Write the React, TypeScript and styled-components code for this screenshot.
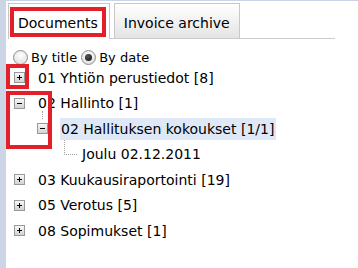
import React from "react";
import styled, { createGlobalStyle } from "styled-components";

const Global = createGlobalStyle`
  html, body { margin: 0; padding: 0; background: #fff; }
  body { font-family: "DejaVu Sans", "Noto Sans", sans-serif; font-size: 14px; color: #000; }
`;

const Page = styled.div`
  position: relative;
  display: flex;
  width: 358px;
  height: 268px;
  overflow: hidden;
`;

const LeftStrip = styled.div`
  width: 6px;
  background: #cbd5e6;
  flex: none;
`;

const Main = styled.div`
  flex: 1;
  display: flex;
  flex-direction: column;
  border-top: 1px solid #c9d4e6;
  padding-left: 2px;
`;

const TabBar = styled.div`
  display: flex;
  align-items: flex-end;
  height: 37px;
  width: 327px;
  border-bottom: 1px solid #cccccc;
  gap: 4px;
`;

const Tab = styled.div<{ $active?: boolean }>`
  height: ${(p) => (p.$active ? 36 : 35)}px;
  box-sizing: border-box;
  display: flex;
  align-items: center;
  padding: 3px ${(p) => (p.$active ? 11 : 9)}px 0 9px;
  border: 1px solid #c8c8c8;
  border-bottom: none;
  font-size: 14px;
  color: #000;
  margin-bottom: ${(p) => (p.$active ? -1 : 0)}px;
  background: ${(p) => (p.$active ? "#fff" : "linear-gradient(#ffffff, #e4e4e4)")};
`;

const RadioRow = styled.div`
  display: flex;
  align-items: center;
  height: 16px;
  margin-top: 10px;
  padding-left: 5px;
  font-size: 13px;
`;

const RadioLabel = styled.label`
  display: flex;
  align-items: center;
  gap: 3px;
  margin-right: 4px;
`;

const Radio = styled.span<{ $checked?: boolean }>`
  width: 15px;
  height: 15px;
  box-sizing: border-box;
  border-radius: 50%;
  border: 1px solid #8e8e8e;
  background: radial-gradient(circle at 50% 35%, #ffffff, #d8d8d8);
  display: flex;
  align-items: center;
  justify-content: center;
  &::after {
    content: "";
    display: ${(p) => (p.$checked ? "block" : "none")};
    width: 7px;
    height: 7px;
    border-radius: 50%;
    background: radial-gradient(circle at 40% 35%, #555, #111);
  }
`;

const Tree = styled.div`
  display: flex;
  flex-direction: column;
`;

const Row = styled.div<{ $level: number }>`
  position: relative;
  display: flex;
  align-items: center;
  height: 25.5px;
  padding-left: ${(p) => 6 + p.$level * 23}px;
`;

const Toggle = styled.span`
  width: 11px;
  height: 11px;
  box-sizing: border-box;
  border: 1px solid #999999;
  background: linear-gradient(#f8f8f8, #d2d2d2);
  position: relative;
  flex: none;
  margin-right: 13px;
`;

const Bar = styled.span<{ $v?: boolean }>`
  position: absolute;
  background: #000;
  left: ${(p) => (p.$v ? 4 : 2)}px;
  top: ${(p) => (p.$v ? 2 : 4)}px;
  width: ${(p) => (p.$v ? 1 : 5)}px;
  height: ${(p) => (p.$v ? 5 : 1)}px;
`;

const Label = styled.span<{ $selected?: boolean }>`
  height: 22px;
  line-height: 22px;
  padding: 0 2px 0 1px;
  margin-left: -1px;
  background: ${(p) => (p.$selected ? "#dfe8f7" : "transparent")};
  white-space: nowrap;
`;

const Connector = styled.span`
  width: 12px;
  height: 14px;
  margin-top: -14px;
  margin-right: 5px;
  margin-left: 4px;
  border-left: 1px dotted #a0a0a0;
  border-bottom: 1px dotted #a0a0a0;
  flex: none;
`;

const StubLine = styled.span<{ $left: number; $top: number; $h: number }>`
  position: absolute;
  left: ${(p) => p.$left}px;
  top: ${(p) => p.$top}px;
  height: ${(p) => p.$h}px;
  border-left: 1px dotted #a0a0a0;
`;

const Mark = styled.div<{ $x: number; $y: number; $w: number; $h: number }>`
  position: absolute;
  left: ${(p) => p.$x}px;
  top: ${(p) => p.$y}px;
  width: ${(p) => p.$w}px;
  height: ${(p) => p.$h}px;
  box-sizing: border-box;
  border: 4px solid #e3202a;
  pointer-events: none;
`;

const Plus = () => (
  <Toggle>
    <Bar />
    <Bar $v />
  </Toggle>
);
const Minus = () => (
  <Toggle>
    <Bar />
  </Toggle>
);

export default function App() {
  return (
    <>
      <Global />
      <Page>
        <LeftStrip />
        <Main>
          <TabBar>
            <Tab $active>Documents</Tab>
            <Tab>Invoice archive</Tab>
          </TabBar>
          <RadioRow>
            <RadioLabel>
              <Radio />
              By title
            </RadioLabel>
            <RadioLabel>
              <Radio $checked />
              By date
            </RadioLabel>
          </RadioRow>
          <Tree>
            <Row $level={0}>
              <Plus />
              <Label>01 Yhtiön perustiedot [8]</Label>
            </Row>
            <Row $level={0}>
              <Minus />
              <Label>02 Hallinto [1]</Label>
            </Row>
            <Row $level={1}>
              <StubLine $left={34} $top={-5} $h={8} />
              <Minus />
              <Label $selected>02 Hallituksen kokoukset [1/1]</Label>
            </Row>
            <Row $level={2}>
              <Connector />
              <Label>Joulu 02.12.2011</Label>
            </Row>
            <Row $level={0}>
              <Plus />
              <Label>03 Kuukausiraportointi [19]</Label>
            </Row>
            <Row $level={0}>
              <Plus />
              <Label>05 Verotus [5]</Label>
            </Row>
            <Row $level={0}>
              <Plus />
              <Label>08 Sopimukset [1]</Label>
            </Row>
          </Tree>
        </Main>
        <Mark $x={10} $y={7} $w={96} $h={30} />
        <Mark $x={6} $y={64} $w={23} $h={25} />
        <Mark $x={6} $y={91} $w={46} $h={58} />
      </Page>
    </>
  );
}
